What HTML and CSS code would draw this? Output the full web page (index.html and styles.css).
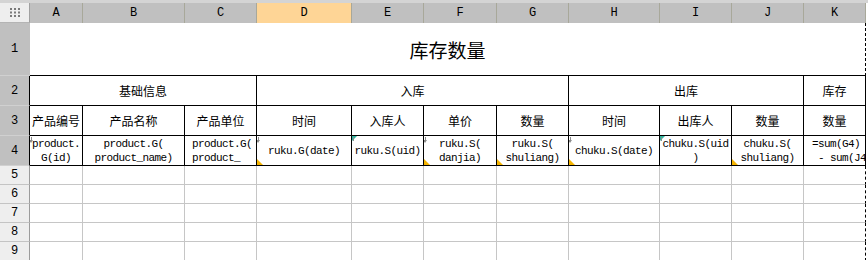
FILE: index.html
```html
<!doctype html>
<html>
<head>
 <meta http-equiv="Content-Type" content="text/html; charset=utf-8">
 <title>库存数量</title>
<link rel="stylesheet" href="styles.css">
</head>

<body>
  <div class="topbar"></div>
  <table class="sheet">
    <colgroup>
      <col class="w30"><col class="w53"><col class="w102"><col class="w72"><col class="w95"><col class="w72">
      <col class="w73"><col class="w72"><col class="w91"><col class="w72"><col class="w72"><col class="w62"><col class="w2">
    </colgroup>
    <tr class="hd">
      <th class="corner">
        <svg width="10" height="9" viewBox="0 0 10 9">
          <g fill="#7a7a7a">
            <rect x="0" y="0" width="2" height="2"/><rect x="4" y="0" width="2" height="2"/><rect x="8" y="0" width="2" height="2"/>
            <rect x="0" y="3.5" width="2" height="2"/><rect x="4" y="3.5" width="2" height="2"/><rect x="8" y="3.5" width="2" height="2"/>
            <rect x="0" y="7" width="2" height="2"/><rect x="4" y="7" width="2" height="2"/><rect x="8" y="7" width="2" height="2"/>
          </g>
        </svg>
      </th>
      <th>A</th><th>B</th><th>C</th><th class="on">D</th><th>E</th><th>F</th>
      <th>G</th><th>H</th><th>I</th><th>J</th><th>K</th><th class="tail"></th>
    </tr>
    <tr class="r1">
      <th class="rn sel top">1</th>
      <td colspan="11" class="title">库存数量</td>
      <td class="tail"></td>
    </tr>
    <tr class="r2">
      <th class="rn sel">2</th>
      <td colspan="3" class="b">基础信息</td>
      <td colspan="4" class="b">入库</td>
      <td colspan="3" class="b">出库</td>
      <td class="b">库存</td>
      <td class="tail"></td>
    </tr>
    <tr class="r2">
      <th class="rn sel">3</th>
      <td class="b">产品编号</td>
      <td class="b">产品名称</td>
      <td class="b">产品单位</td>
      <td class="b">时间</td>
      <td class="b">入库人</td>
      <td class="b">单价</td>
      <td class="b">数量</td>
      <td class="b">时间</td>
      <td class="b">出库人</td>
      <td class="b">数量</td>
      <td class="b">数量</td>
      <td class="tail"></td>
    </tr>
    <tr class="r2 code">
      <th class="rn sel">4</th>
      <td class="b"><i class="arrow"></i>product.<br>G(id)</td>
      <td class="b">product.G(<br>product_name)</td>
      <td class="b left">product.G(<br>product_</td>
      <td class="b"><i class="arrow"></i><i class="note"></i>ruku.G(date)</td>
      <td class="b"><i class="tick"></i>ruku.S(uid)</td>
      <td class="b"><i class="arrow"></i><i class="note"></i>ruku.S(<br>danjia)</td>
      <td class="b"><i class="note"></i>ruku.S(<br>shuliang)</td>
      <td class="b"><i class="arrow"></i><i class="note"></i>chuku.S(date)</td>
      <td class="b"><i class="tick"></i>chuku.S(uid<br>)</td>
      <td class="b"><i class="note"></i>chuku.S(<br>shuliang)</td>
      <td class="b left pre">=sum(G4)<br> - sum(J4</td>
      <td class="tail"></td>
    </tr>
    <tr class="r5"><th class="rn">5</th><td></td><td></td><td></td><td></td><td></td><td></td><td></td><td></td><td></td><td></td><td class="k"></td><td class="tail"></td></tr>
    <tr class="r5"><th class="rn">6</th><td></td><td></td><td></td><td></td><td></td><td></td><td></td><td></td><td></td><td></td><td class="k"></td><td class="tail"></td></tr>
    <tr class="r5"><th class="rn">7</th><td></td><td></td><td></td><td></td><td></td><td></td><td></td><td></td><td></td><td></td><td class="k"></td><td class="tail"></td></tr>
    <tr class="r5"><th class="rn">8</th><td></td><td></td><td></td><td></td><td></td><td></td><td></td><td></td><td></td><td></td><td class="k"></td><td class="tail"></td></tr>
    <tr class="r5"><th class="rn">9</th><td></td><td></td><td></td><td></td><td></td><td></td><td></td><td></td><td></td><td></td><td class="k"></td><td class="tail"></td></tr>
  </table>
</body>

</html>
```

FILE: styles.css
```css
html,body{margin:0;padding:0;background:#fff;overflow:hidden;}
body{width:868px;height:260px;font-family:"Liberation Mono","Noto Sans CJK SC",monospace;color:#000;}
.topbar{height:3px;background:#d4d4d4;}

.sheet{border-collapse:separate;border-spacing:0;table-layout:fixed;width:868px;}
.sheet td,.sheet th{padding:0;overflow:hidden;white-space:nowrap;text-align:center;vertical-align:middle;font-weight:normal;box-sizing:border-box;}
.w30{width:30px;}.w53{width:53px;}.w102{width:102px;}.w72{width:72px;}.w95{width:95px;}
.w73{width:73px;}.w91{width:91px;}.w62{width:62px;}.w2{width:2px;}

/* column header */
.hd{height:20px;}
.hd th{background:#c0c0c0;border-right:1px solid #a8a89a;font-size:12px;line-height:18px;}
.hd th.on{background:#fed596;}
.hd th.corner{background:#eeeeee;border-right:1px solid #a0a0a0;border-bottom:1px solid #b4b4b4;line-height:0;}
.hd th.tail{background:#fff;border:none;}

/* row numbers */
.rn{font-size:12px;background:#eeeeee;border-right:1px solid #9c9c9c;border-bottom:1px solid #c4c4c4;}
.rn.sel{background:#c0c0c0;border-bottom-color:#d0d0d0;border-right-color:#000;}
.rn.top{border-right-color:#c0c0c0;}

/* rows */
.r1{height:53px;}
.r2{height:30px;}
.r5{height:19px;}
.r5 td{border-right:1px solid #c6c6c6;border-bottom:1px solid #c6c6c6;}
.r5 td.k{border-right:1px dashed #000;}
.sheet td.tail{border:none;background:#fff;}

.title{font-family:"Noto Sans CJK SC",sans-serif;font-size:19px;border-bottom:1px solid #000;border-right:1px dashed #000;padding-bottom:2px;}
.b{font-family:"Noto Sans CJK SC",sans-serif;font-size:12px;border-right:1px solid #000;border-bottom:1px solid #000;position:relative;}

.code .b{font-family:"Liberation Mono",monospace;font-size:11px;letter-spacing:-0.6px;line-height:14px;}
.code .left{text-align:left;padding-left:7px;}
.code .pre{white-space:pre;padding-left:8px;}

/* cell marks */
.arrow{position:absolute;left:1px;top:1px;width:1px;height:4px;background:#8c8c8c;}
.arrow:after{content:"";position:absolute;left:-2px;top:3px;border-left:2.5px solid transparent;border-right:2.5px solid transparent;border-top:3px solid #8c8c8c;}
.note{position:absolute;left:0;bottom:0;width:0;height:0;border-top:6px solid transparent;border-left:6px solid #f5b400;}
.tick{position:absolute;left:0;top:0;width:0;height:0;border-top:5px solid #2fb7a0;border-right:5px solid transparent;}
.tick:after{content:"";position:absolute;left:1px;top:-4px;width:1px;height:4px;background:#8c8c8c;}
```
